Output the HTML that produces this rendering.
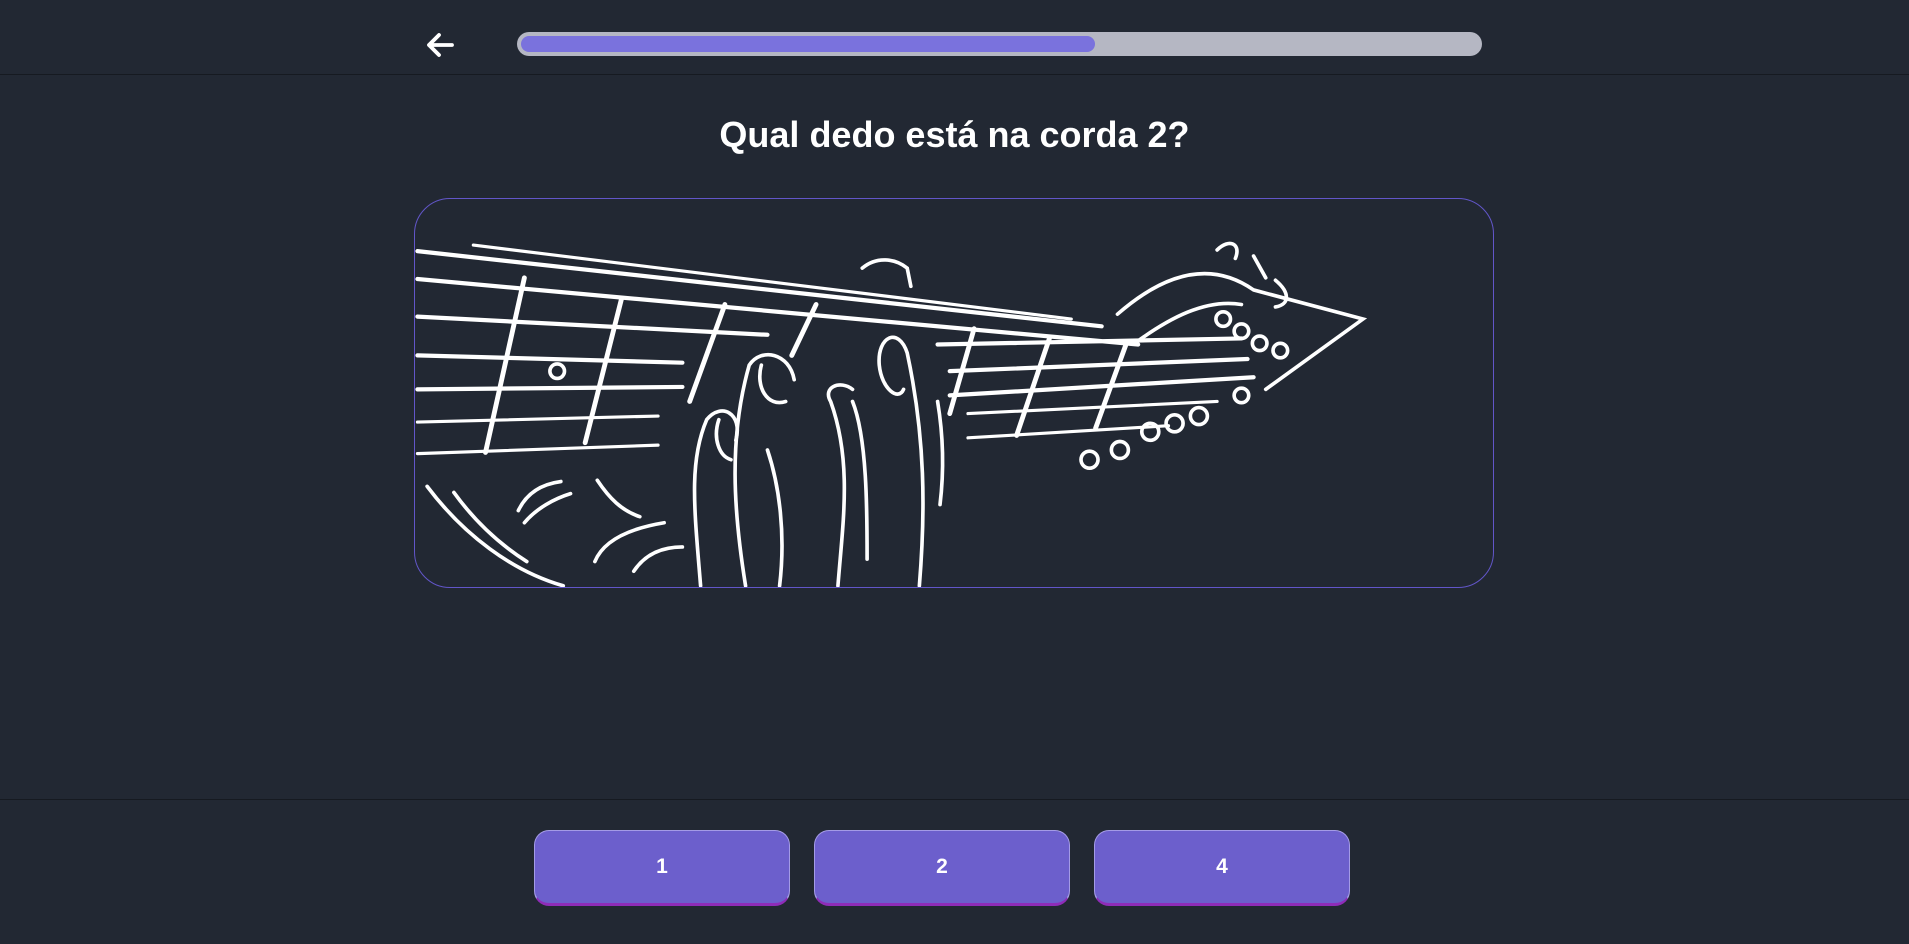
<!DOCTYPE html>
<html><head><meta charset="utf-8"><style>
html,body{margin:0;padding:0;background:#222833;width:1909px;height:944px;overflow:hidden;font-family:"Liberation Sans",sans-serif;}
.hdr{position:absolute;left:0;top:0;width:1909px;height:74px;border-bottom:1px solid #161a21;}
.back{position:absolute;left:425px;top:31px;}
.track{position:absolute;left:517px;top:32px;width:965px;height:24px;border-radius:12px;background:#b5b7c3;}
.fill{position:absolute;left:4px;top:4px;height:16px;width:574px;border-radius:8px;background:#7a72dd;}
h1{position:absolute;left:0;width:1909px;top:114px;margin:0;text-align:center;color:#fff;font-size:36px;font-weight:bold;}
.card{position:absolute;left:414px;top:198px;width:1078px;height:388px;border:1px solid #6256c9;border-radius:36px;overflow:hidden;}
.foot{position:absolute;left:0;top:799px;width:1909px;border-top:1px solid #161a21;}
.btn{position:absolute;top:830px;width:256px;height:76px;border-radius:15px;background:#6c5fcc;border:1px solid #a49be6;border-bottom:3px solid #8f2cb8;box-sizing:border-box;color:#fff;font-weight:bold;font-size:21px;display:flex;align-items:center;justify-content:center;}
</style></head><body>
<div class="hdr"></div>
<svg class="back" width="30" height="28" viewBox="0 0 30 28"><path d="M27 14H4M14 4L4 14L14 24" stroke="#fff" stroke-width="3.8" fill="none" stroke-linecap="round" stroke-linejoin="round"/></svg>
<div class="track"><div class="fill"></div></div>
<h1>Qual dedo está na corda 2?</h1>
<div class="card">
<svg width="1078" height="388" viewBox="340 163 887 320" preserveAspectRatio="none" fill="none" stroke="#fff" stroke-linecap="round">
<g stroke-width="3.5">
<path d="M342 206L905 268M342 229L935 283M342 260L630 275M770 283L1020 278M342 292L560 298M780 305L1025 295M342 320L560 318M780 325L1030 310"/>
</g>
<g stroke-width="2.6">
<path d="M388 201L880 262M342 347L540 342M795 340L1000 330M342 373L540 366M795 360L960 350"/>
</g>
<g stroke-width="4">
<path d="M430 228L398 372M510 245L480 364M595 250L566 330M670 250L650 292M800 270L780 340M862 278L835 358M925 283L900 352"/>
</g>
<g stroke-width="3">
<path d="M575 482C570 420 565 380 580 345C592 330 610 340 604 362M590 345C585 360 590 375 600 378"/>
<path d="M612 482C602 420 598 360 615 300C625 285 648 290 652 312M625 300C620 318 630 335 645 330"/>
<path d="M640 482C645 440 640 400 630 370"/>
<path d="M688 482C692 430 700 380 682 330C675 318 690 312 700 320"/>
<path d="M700 330C712 360 712 420 712 460"/>
<path d="M755 482C760 420 760 360 745 290C738 268 720 276 722 300C724 320 738 330 742 320"/>
<path d="M770 330C775 360 775 390 772 415"/>
<path d="M350 400C380 440 420 470 462 482M372 405C390 430 410 448 432 462"/>
<path d="M425 420C432 405 445 398 460 396M430 430C440 418 455 410 468 406M490 395C500 410 510 420 525 425M488 462C495 445 515 435 545 430M520 470C530 455 545 450 560 450"/>
<path d="M708 220C720 210 735 212 745 220L748 235"/>
<path d="M918 258C950 230 990 210 1030 238L1120 262L1040 320M935 280C960 262 990 245 1020 250"/>
<path d="M1000 205C1010 195 1020 200 1015 212M1030 210L1040 228M1048 230C1060 240 1060 250 1048 252"/>
<circle cx="1005" cy="262" r="6"/><circle cx="1020" cy="272" r="6"/><circle cx="1035" cy="282" r="6"/><circle cx="1052" cy="288" r="6"/>
<circle cx="895" cy="378" r="7"/><circle cx="920" cy="370" r="7"/><circle cx="945" cy="355" r="7"/><circle cx="965" cy="348" r="7"/><circle cx="985" cy="342" r="7"/><circle cx="1020" cy="325" r="6"/>
<circle cx="457" cy="305" r="6"/>
</g>
</svg>
</div>
<div class="foot"></div>
<div class="btn" style="left:534px">1</div>
<div class="btn" style="left:814px">2</div>
<div class="btn" style="left:1094px">4</div>
</body></html>
